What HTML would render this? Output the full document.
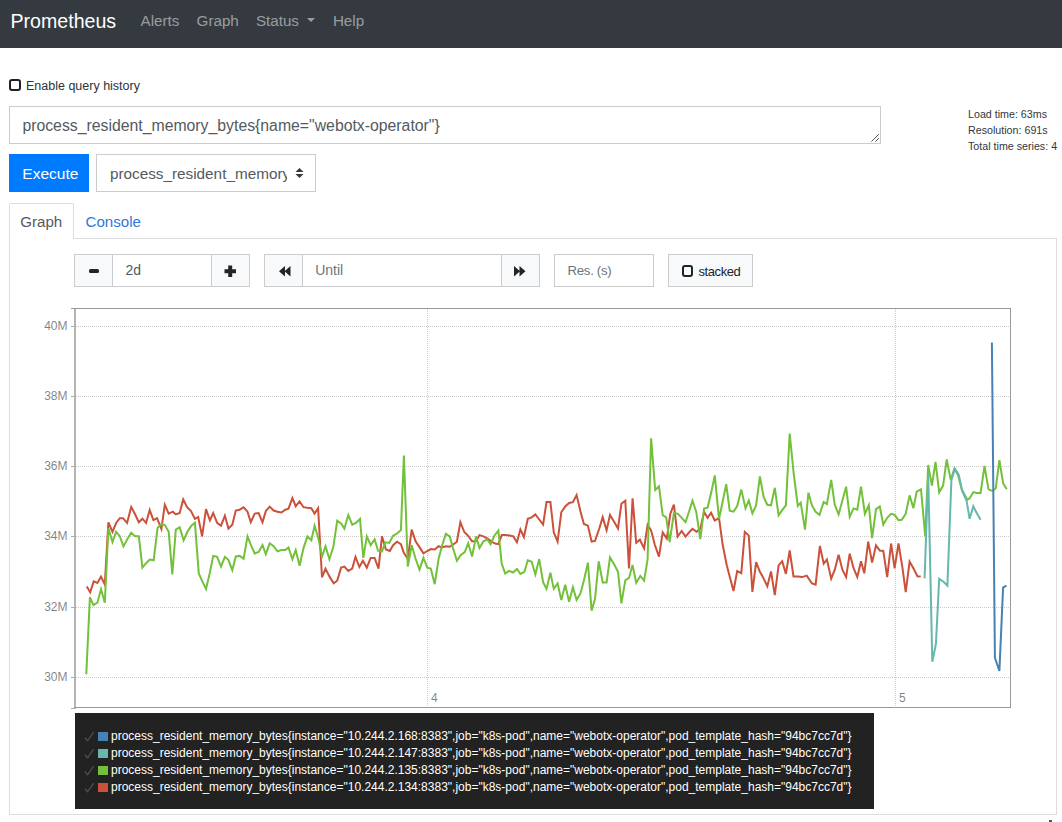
<!DOCTYPE html>
<html><head><meta charset="utf-8"><title>Prometheus Time Series Collection and Processing Server</title>
<style>
html,body{margin:0;padding:0;background:#fff;}
body{width:1062px;height:822px;overflow:hidden;position:relative;font-family:"Liberation Sans",sans-serif;}
.t{position:absolute;line-height:1;white-space:nowrap;}
.box{position:absolute;box-sizing:border-box;}
.nav{position:absolute;left:0;top:0;width:1062px;height:48px;background:#343a40;}
.chart{position:absolute;left:0;top:0;}
.chart text{font-family:"Liberation Sans",sans-serif;}
.legend{position:absolute;left:75px;top:713px;width:799px;height:96px;background:#222;}
.lrow{position:absolute;left:0;height:17px;width:799px;font-family:"Liberation Sans",sans-serif;font-size:12px;line-height:17px;color:#fff;white-space:nowrap;}
.chk{position:absolute;left:8px;top:0;}
.sw{position:absolute;left:23px;top:3.6px;width:9.6px;height:9.4px;}
.lt{position:absolute;left:36px;top:0;}
</style></head><body>
<div class="nav"></div>
<div class="t" style="left:10.5px;top:12.31px;font-size:19.6px;color:#fff;">Prometheus</div>
<div class="t" style="left:140.6px;top:13.33px;font-size:15.2px;color:rgba(255,255,255,.5);">Alerts</div>
<div class="t" style="left:196.6px;top:13.33px;font-size:15.2px;color:rgba(255,255,255,.5);">Graph</div>
<div class="t" style="left:255.9px;top:13.33px;font-size:15.2px;color:rgba(255,255,255,.5);">Status</div>
<div class="box" style="left:307px;top:18px;width:0;height:0;border-left:4.8px solid transparent;border-right:4.8px solid transparent;border-top:4.8px solid rgba(255,255,255,.5);"></div>
<div class="t" style="left:332.9px;top:13.33px;font-size:15.2px;color:rgba(255,255,255,.5);">Help</div>

<div class="box" style="left:9.3px;top:79.3px;width:11.6px;height:11.4px;border:2.2px solid #1d2124;border-radius:3px;"></div>
<div class="t" style="left:26px;top:80.42px;font-size:12.5px;color:#2e3236;">Enable query history</div>

<div class="box" style="left:9px;top:106px;width:872px;height:38px;border:1px solid #ccc;"></div>
<div class="t" style="left:22.4px;top:118.33px;font-size:15.8px;color:#535a61;">process_resident_memory_bytes{name="webotx-operator"}</div>
<svg class="box" style="left:868px;top:131px" width="12" height="12"><path d="M3.4,10.6 L10.8,3.2 M7.4,10.6 L10.8,7.2" stroke="#555" stroke-width="1"/></svg>

<div class="box" style="left:9px;top:154px;width:80px;height:38px;background:#007bff;"></div>
<div class="t" style="left:22.3px;top:165.98px;font-size:15.5px;color:#fff;">Execute</div>
<div class="box" style="left:96px;top:154px;width:220px;height:38px;border:1px solid #ccc;"></div>
<div class="box" style="left:109.9px;top:160px;width:177px;height:26px;overflow:hidden;"><div class="t" style="left:0px;top:5.95px;font-size:15.3px;color:#535a61;">process_resident_memory</div></div>
<svg class="box" style="left:295px;top:168px" width="9" height="10"><path d="M4.5,0 L8.5,4 L0.5,4 Z M0.5,6 L8.5,6 L4.5,10 Z" fill="#343a40"/></svg>

<div class="box" style="left:9px;top:203px;width:65px;height:36px;border:1px solid #ddd;border-bottom:none;border-radius:2px 2px 0 0;background:#fff;"></div>
<div class="box" style="left:73px;top:238px;width:984px;height:1px;background:#ddd;"></div>
<div class="box" style="left:9px;top:238px;width:1048px;height:577px;border:1px solid #ddd;border-top:none;"></div>
<div class="t" style="left:20.3px;top:213.82px;font-size:15.1px;color:#535a61;">Graph</div>
<div class="t" style="left:85.5px;top:213.82px;font-size:15.1px;color:#2f78d8;">Console</div>

<!-- controls -->
<div class="box" style="left:74px;top:254px;width:176px;height:33px;border:1px solid #ccc;"></div>
<div class="box" style="left:75px;top:255px;width:37px;height:31px;background:#f8f9fa;"></div>
<div class="box" style="left:112px;top:255px;width:1px;height:31px;background:#ccc;"></div>
<div class="box" style="left:211px;top:255px;width:1px;height:31px;background:#ccc;"></div>
<div class="box" style="left:212px;top:255px;width:37px;height:31px;background:#f8f9fa;"></div>
<div class="box" style="left:89px;top:268.5px;width:10px;height:4px;background:#212529;border-radius:1.5px;"></div>
<svg class="box" style="left:223.8px;top:265px" width="12.5" height="12.5"><path d="M4.2,0.5 h4 v3.7 h3.8 v4 h-3.8 v3.8 h-4 v-3.8 h-3.7 v-4 h3.7 z" fill="#212529"/></svg>
<div class="t" style="left:125.4px;top:263.05px;font-size:14px;color:#535a61;">2d</div>

<div class="box" style="left:264px;top:254px;width:276px;height:33px;border:1px solid #ccc;"></div>
<div class="box" style="left:265px;top:255px;width:37px;height:31px;background:#f8f9fa;"></div>
<div class="box" style="left:302px;top:255px;width:1px;height:31px;background:#ccc;"></div>
<div class="box" style="left:501px;top:255px;width:1px;height:31px;background:#ccc;"></div>
<div class="box" style="left:502px;top:255px;width:37px;height:31px;background:#f8f9fa;"></div>
<svg class="box" style="left:278.5px;top:265.8px" width="12" height="11"><path d="M0,5.3 L6,0 L6,10.6 Z M5.5,5.3 L11.5,0 L11.5,10.6 Z" fill="#212529"/></svg>
<svg class="box" style="left:513.8px;top:266px" width="12" height="11"><path d="M0,0 L6,5.3 L0,10.6 Z M5.5,0 L11.5,5.3 L5.5,10.6 Z" fill="#212529"/></svg>
<div class="t" style="left:315.2px;top:262.95px;font-size:14px;color:#6c757d;">Until</div>

<div class="box" style="left:554px;top:254px;width:100px;height:33px;border:1px solid #ccc;"></div>
<div class="t" style="left:567.6px;top:263.63px;font-size:13.2px;color:#6c757d;letter-spacing:-0.3px;">Res. (s)</div>

<div class="box" style="left:668px;top:254px;width:85px;height:33px;border:1px solid #ccc;background:#f8f9fa;"></div>
<div class="box" style="left:682px;top:265px;width:11.4px;height:12px;border:2.3px solid #212529;border-radius:3px;"></div>
<div class="t" style="left:698.4px;top:264.90px;font-size:13px;color:#212529;letter-spacing:-0.4px;">stacked</div>

<div class="t" style="left:968px;top:108.94px;font-size:10.7px;color:#33373b;">Load time: 63ms</div>
<div class="t" style="left:968px;top:124.94px;font-size:10.7px;color:#33373b;">Resolution: 691s</div>
<div class="t" style="left:968px;top:140.94px;font-size:10.7px;color:#33373b;">Total time series: 4</div>

<svg class="chart" width="1062" height="822" viewBox="0 0 1062 822">
<line x1="76" y1="326.5" x2="1010" y2="326.5" stroke="#000" stroke-opacity="0.2" stroke-dasharray="1 1"/>
<line x1="76" y1="396.5" x2="1010" y2="396.5" stroke="#000" stroke-opacity="0.2" stroke-dasharray="1 1"/>
<line x1="76" y1="466.5" x2="1010" y2="466.5" stroke="#000" stroke-opacity="0.2" stroke-dasharray="1 1"/>
<line x1="76" y1="536.5" x2="1010" y2="536.5" stroke="#000" stroke-opacity="0.2" stroke-dasharray="1 1"/>
<line x1="76" y1="607.5" x2="1010" y2="607.5" stroke="#000" stroke-opacity="0.2" stroke-dasharray="1 1"/>
<line x1="76" y1="677.5" x2="1010" y2="677.5" stroke="#000" stroke-opacity="0.2" stroke-dasharray="1 1"/>
<line x1="427.5" y1="309" x2="427.5" y2="707" stroke="#000" stroke-opacity="0.2" stroke-dasharray="1 1"/>
<line x1="895.5" y1="309" x2="895.5" y2="707" stroke="#000" stroke-opacity="0.2" stroke-dasharray="1 1"/>
<rect x="74" y="308" width="2" height="401" fill="#b4b4b4"/>
<line x1="71" y1="308.5" x2="1011" y2="308.5" stroke="#999" stroke-width="1"/>
<line x1="1010.5" y1="308" x2="1010.5" y2="707.5" stroke="#999" stroke-width="1"/>
<line x1="74" y1="707.5" x2="1011" y2="707.5" stroke="#999" stroke-width="1"/>
<line x1="71" y1="708.5" x2="75" y2="708.5" stroke="#aaa" stroke-width="1"/>
<line x1="71" y1="326.5" x2="75" y2="326.5" stroke="#aaa" stroke-width="1"/>
<text x="67.5" y="329.5" text-anchor="end" font-size="12" fill="#000" fill-opacity="0.5">40M</text>
<line x1="71" y1="396.5" x2="75" y2="396.5" stroke="#aaa" stroke-width="1"/>
<text x="67.5" y="399.8" text-anchor="end" font-size="12" fill="#000" fill-opacity="0.5">38M</text>
<line x1="71" y1="466.5" x2="75" y2="466.5" stroke="#aaa" stroke-width="1"/>
<text x="67.5" y="470.1" text-anchor="end" font-size="12" fill="#000" fill-opacity="0.5">36M</text>
<line x1="71" y1="536.5" x2="75" y2="536.5" stroke="#aaa" stroke-width="1"/>
<text x="67.5" y="540.4" text-anchor="end" font-size="12" fill="#000" fill-opacity="0.5">34M</text>
<line x1="71" y1="607.5" x2="75" y2="607.5" stroke="#aaa" stroke-width="1"/>
<text x="67.5" y="610.8" text-anchor="end" font-size="12" fill="#000" fill-opacity="0.5">32M</text>
<line x1="71" y1="677.5" x2="75" y2="677.5" stroke="#aaa" stroke-width="1"/>
<text x="67.5" y="681.1" text-anchor="end" font-size="12" fill="#000" fill-opacity="0.5">30M</text>
<text x="431" y="702" font-size="12" fill="#000" fill-opacity="0.5">4</text>
<text x="899" y="702" font-size="12" fill="#000" fill-opacity="0.5">5</text>
<path d="M86.8,586.6 L90.2,592.4 L93.7,581.4 L97.4,582.9 L101.0,576.6 L104.8,584.5 L108.4,522.3 L112.5,531.8 L116.1,523.0 L119.8,518.2 L123.0,518.2 L127.1,523.0 L131.2,507.0 L135.1,514.3 L138.8,522.3 L142.4,518.7 L146.1,523.0 L149.7,510.0 L153.4,520.1 L157.0,518.2 L161.4,528.9 L164.8,504.8 L168.7,513.6 L172.9,511.7 L175.8,514.4 L179.7,513.0 L183.2,499.4 L187.1,507.2 L191.0,511.1 L194.9,518.9 L198.2,517.0 L202.1,536.4 L206.0,509.2 L209.9,520.3 L213.2,513.0 L217.1,522.8 L221.0,525.7 L224.9,515.6 L228.4,528.6 L232.3,524.7 L235.8,510.5 L239.7,509.7 L243.6,507.2 L247.5,511.7 L250.8,522.2 L254.7,513.6 L258.6,513.0 L262.5,522.2 L265.8,511.1 L269.7,506.6 L273.6,510.5 L277.5,511.7 L281.4,512.5 L285.3,509.7 L288.5,508.6 L292.4,498.1 L295.7,506.2 L299.6,501.4 L303.5,507.2 L307.4,507.8 L311.3,508.2 L314.6,513.6 L318.1,508.2 L322.0,577.3 L325.5,568.6 L329.4,576.4 L333.7,583.2 L337.2,580.7 L341.1,567.6 L344.4,566.6 L348.3,570.9 L352.2,568.6 L355.5,556.9 L359.4,567.0 L362.9,560.8 L366.8,567.6 L370.7,557.9 L374.6,557.9 L378.5,568.6 L382.0,536.4 L385.9,549.5 L389.8,551.0 L393.1,545.2 L397.0,541.7 L400.9,544.2 L403.9,553.0 L407.8,558.8 L411.7,529.6 L415.6,541.3 L419.5,547.1 L423.4,553.4 L427.3,551.0 L430.8,549.1 L434.7,549.5 L438.6,546.2 L441.9,547.5 L445.8,546.2 L449.7,546.8 L453.6,544.2 L456.9,541.7 L460.4,522.2 L464.3,532.0 L468.2,535.8 L472.1,541.3 L476.0,541.3 L479.5,535.1 L483.4,536.4 L487.3,538.4 L491.2,541.3 L495.1,543.6 L498.4,544.2 L501.7,535.1 L505.6,535.1 L509.5,535.5 L513.4,536.4 L516.9,542.3 L520.4,529.4 L523.9,537.0 L527.8,518.8 L531.7,517.4 L535.4,514.4 L539.2,519.5 L543.1,524.6 L546.5,502.1 L550.4,502.1 L553.8,532.4 L557.6,541.6 L561.3,512.3 L565.2,506.4 L569.1,503.0 L572.9,502.1 L576.6,495.0 L580.5,511.5 L583.9,523.9 L587.9,525.6 L591.6,541.6 L595.0,540.9 L599.3,528.5 L602.7,517.1 L606.6,530.2 L610.0,514.9 L614.1,521.7 L618.0,528.5 L621.4,503.8 L625.3,500.8 L629.0,568.5 L632.6,498.4 L636.2,542.8 L639.9,539.7 L644.1,548.4 L647.6,524.8 L651.1,530.4 L654.8,544.8 L659.0,556.6 L662.7,532.4 L666.8,538.6 L670.3,513.8 L673.9,504.5 L677.6,536.6 L681.7,531.0 L685.5,536.6 L689.6,531.8 L692.5,528.9 L696.6,531.8 L700.3,528.9 L704.1,511.7 L707.6,517.9 L711.1,512.8 L714.8,520.6 L719.0,517.9 L722.7,544.8 L726.8,565.5 L733.5,591.0 L737.2,571.1 L741.3,573.2 L744.8,531.8 L748.8,535.6 L752.4,592.0 L756.1,562.2 L759.9,571.8 L763.7,578.6 L767.3,586.3 L771.0,571.4 L774.8,595.2 L778.6,565.4 L782.2,561.2 L785.9,573.9 L789.7,550.5 L793.5,576.5 L797.8,576.5 L802.0,577.1 L806.7,575.6 L812.0,583.5 L815.6,584.6 L819.9,545.9 L823.7,563.7 L826.9,559.5 L831.2,578.6 L834.8,569.7 L838.6,554.8 L842.4,569.7 L846.1,577.1 L849.7,553.7 L853.5,568.0 L857.3,577.1 L861.0,561.2 L864.3,573.3 L868.2,541.6 L872.1,562.6 L876.0,545.4 L879.8,550.5 L883.3,550.9 L887.2,577.2 L891.1,543.5 L894.6,568.4 L898.5,543.5 L902.4,567.4 L905.7,592.1 L909.6,561.6 L913.5,568.4 L917.4,576.2 L920.7,576.6" fill="none" stroke="#cb513a" stroke-width="2" stroke-linejoin="miter" stroke-miterlimit="4"/>
<path d="M86.3,674.2 L89.9,597.2 L93.4,605.1 L97.4,602.7 L101.0,589.3 L104.8,602.7 L108.4,528.2 L112.5,542.0 L116.1,531.8 L119.8,536.2 L123.4,546.4 L127.4,539.1 L131.2,532.8 L135.1,536.2 L138.8,536.2 L142.4,567.6 L146.1,563.2 L149.7,559.6 L153.7,560.3 L157.5,528.2 L161.4,523.8 L165.0,525.3 L168.7,531.8 L172.3,574.4 L175.8,529.6 L179.7,527.3 L183.6,540.3 L187.5,531.6 L191.4,525.7 L194.9,522.8 L198.8,573.5 L202.7,582.2 L206.0,589.0 L209.9,572.5 L213.2,555.9 L217.1,556.9 L221.0,566.6 L224.9,556.9 L228.4,559.8 L232.3,570.1 L235.8,556.5 L239.7,555.9 L243.6,558.8 L247.5,536.4 L251.4,546.2 L254.7,553.4 L258.6,552.0 L262.5,545.2 L265.8,554.0 L269.7,543.3 L273.6,546.2 L277.5,551.4 L281.4,550.1 L285.3,550.1 L288.5,547.5 L292.4,559.2 L295.7,550.1 L299.6,565.7 L303.5,548.1 L307.4,536.4 L311.3,540.3 L314.6,525.7 L318.1,537.4 L322.0,556.5 L325.5,546.2 L329.4,559.2 L333.3,547.1 L337.2,520.8 L341.1,523.4 L344.4,528.6 L348.3,515.0 L352.2,524.7 L356.1,522.8 L360.0,518.9 L363.3,557.9 L366.8,536.4 L370.7,545.2 L374.6,539.4 L378.1,550.7 L382.0,551.4 L385.3,542.3 L389.2,542.9 L393.1,535.8 L397.0,533.5 L400.9,530.0 L403.9,455.6 L407.8,566.6 L411.7,545.2 L415.6,558.8 L419.5,569.6 L423.4,557.9 L427.3,567.6 L430.8,568.6 L434.7,584.2 L438.6,558.8 L441.9,546.2 L445.8,533.9 L449.7,536.4 L453.0,548.1 L456.9,560.8 L460.8,554.9 L464.7,552.0 L468.2,543.3 L472.1,556.5 L476.0,536.4 L479.5,548.1 L483.4,541.3 L487.3,539.4 L490.6,544.2 L494.5,535.5 L498.4,530.6 L501.7,563.7 L505.2,573.5 L509.1,570.9 L513.0,572.5 L517.0,568.9 L520.4,574.0 L524.4,571.9 L527.8,560.3 L531.7,561.7 L535.4,574.5 L539.2,559.1 L543.1,582.1 L546.5,588.9 L550.4,572.8 L553.8,588.9 L557.6,583.5 L561.3,600.0 L565.2,584.7 L569.1,601.7 L572.9,587.2 L576.6,600.0 L580.5,593.2 L583.9,580.4 L587.9,562.6 L591.6,610.7 L595.0,599.1 L598.7,561.4 L602.7,582.5 L606.6,582.5 L610.0,557.4 L614.1,564.3 L618.0,571.9 L621.4,603.4 L625.3,580.4 L629.0,577.9 L632.5,564.9 L636.2,582.7 L640.3,575.9 L644.1,580.6 L647.6,559.3 L651.1,438.3 L655.2,490.0 L659.0,486.3 L662.7,515.2 L666.2,517.3 L669.7,542.1 L673.9,512.8 L678.0,513.8 L681.7,517.9 L685.5,522.1 L689.0,511.7 L692.5,500.8 L696.2,511.7 L700.3,539.2 L704.1,508.6 L707.6,507.6 L711.1,493.1 L714.8,475.5 L719.0,519.0 L722.7,501.4 L726.2,484.2 L729.7,510.7 L733.5,511.7 L737.2,506.1 L741.3,489.6 L745.5,508.2 L748.8,500.5 L752.4,513.3 L756.1,505.4 L759.9,476.5 L763.7,497.3 L767.3,504.8 L771.0,505.4 L774.8,487.8 L778.6,515.4 L782.2,510.1 L785.9,505.4 L789.7,433.5 L793.5,471.8 L797.8,505.9 L800.7,502.7 L805.0,529.7 L808.4,492.7 L812.0,505.4 L815.6,511.8 L819.5,514.8 L823.7,502.0 L826.9,504.1 L831.2,479.9 L834.8,504.8 L838.6,514.4 L842.4,500.5 L846.1,486.7 L849.7,516.9 L853.5,508.4 L857.3,509.7 L861.0,486.7 L864.9,513.9 L868.8,505.2 L872.1,538.2 L876.0,509.1 L879.8,506.5 L883.3,524.6 L887.2,517.8 L891.1,513.9 L894.6,514.9 L898.5,520.2 L901.8,519.8 L905.7,513.9 L909.6,495.4 L913.4,508.1 L916.7,491.7 L921.0,489.3 L925.2,536.1 L928.2,465.0 L931.9,485.6 L935.5,461.9 L939.2,492.3 L943.1,485.6 L946.7,459.5 L950.8,480.1 L954.4,468.6 L958.1,475.3 L961.7,489.3 L967.2,499.6 L969.6,498.4 L973.3,492.1 L976.7,492.9 L980.6,492.9 L984.5,465.8 L988.5,489.3 L992.7,491.1 L995.8,488.1 L999.4,460.1 L1003.1,483.2 L1006.7,489.3" fill="none" stroke="#73c03a" stroke-width="2" stroke-linejoin="miter" stroke-miterlimit="4"/>
<path d="M924.6,578.4 L928.2,474.0 L932.3,661.8 L935.9,644.0 L939.2,578.9 L943.8,582.0 L947.4,585.7 L951.4,480.1 L954.8,468.6 L958.7,474.7 L962.3,491.1 L966.6,500.8 L969.6,518.8 L973.3,506.3 L976.7,513.0 L980.6,519.7" fill="none" stroke="#65b9ac" stroke-width="2" stroke-linejoin="miter" stroke-miterlimit="4"/>
<path d="M991.9,342.5 L994.9,657.7 L999.4,670.9 L1003.1,587.5 L1006.4,585.7" fill="none" stroke="#4682b4" stroke-width="2" stroke-linejoin="miter" stroke-miterlimit="4"/>
</svg>

<div class="box" style="left:1049px;top:820px;width:3px;height:2px;background:#555;"></div>
<div class="legend">
<div class="lrow" style="top:15px"><svg class="chk" width="14" height="17"><path d="M1.8,9.6 L4.6,12.8 L10.6,4.2" fill="none" stroke="#505050" stroke-width="1.3"/></svg><span class="sw" style="background:#4682b4"></span><span class="lt">process_resident_memory_bytes{instance="10.244.2.168:8383",job="k8s-pod",name="webotx-operator",pod_template_hash="94bc7cc7d"}</span></div>
<div class="lrow" style="top:32px"><svg class="chk" width="14" height="17"><path d="M1.8,9.6 L4.6,12.8 L10.6,4.2" fill="none" stroke="#505050" stroke-width="1.3"/></svg><span class="sw" style="background:#65b9ac"></span><span class="lt">process_resident_memory_bytes{instance="10.244.2.147:8383",job="k8s-pod",name="webotx-operator",pod_template_hash="94bc7cc7d"}</span></div>
<div class="lrow" style="top:49px"><svg class="chk" width="14" height="17"><path d="M1.8,9.6 L4.6,12.8 L10.6,4.2" fill="none" stroke="#505050" stroke-width="1.3"/></svg><span class="sw" style="background:#73c03a"></span><span class="lt">process_resident_memory_bytes{instance="10.244.2.135:8383",job="k8s-pod",name="webotx-operator",pod_template_hash="94bc7cc7d"}</span></div>
<div class="lrow" style="top:66px"><svg class="chk" width="14" height="17"><path d="M1.8,9.6 L4.6,12.8 L10.6,4.2" fill="none" stroke="#505050" stroke-width="1.3"/></svg><span class="sw" style="background:#cb513a"></span><span class="lt">process_resident_memory_bytes{instance="10.244.2.134:8383",job="k8s-pod",name="webotx-operator",pod_template_hash="94bc7cc7d"}</span></div>
</div>
</body></html>
